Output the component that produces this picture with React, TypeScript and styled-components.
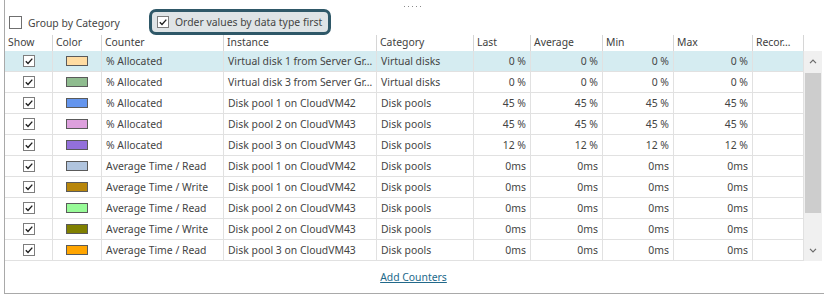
import styled, { createGlobalStyle } from 'styled-components';

const GlobalStyle = createGlobalStyle`
    html, body {
        margin: 0;
        padding: 0;
        background: #ffffff;
    }
    body {
        font-family: 'Noto Sans', 'Open Sans', sans-serif;
        font-size: 10.4px;
        color: #444444;
    }
`;

const COLUMNS = '48px 49px 122px 153px 97px 57px 72px 71px 79px 51px';

type Counter = {
    color: string;
    counter: string;
    instance: string;
    category: string;
    value: string;
};

const counters: Counter[] = [
    { color: '#ffdca2', counter: '% Allocated', instance: 'Virtual disk 1 from Server Gr…', category: 'Virtual disks', value: '0 %' },
    { color: '#8fbc8f', counter: '% Allocated', instance: 'Virtual disk 3 from Server Gr…', category: 'Virtual disks', value: '0 %' },
    { color: '#6495ed', counter: '% Allocated', instance: 'Disk pool 1 on CloudVM42', category: 'Disk pools', value: '45 %' },
    { color: '#dda0dd', counter: '% Allocated', instance: 'Disk pool 2 on CloudVM43', category: 'Disk pools', value: '45 %' },
    { color: '#9370db', counter: '% Allocated', instance: 'Disk pool 3 on CloudVM43', category: 'Disk pools', value: '12 %' },
    { color: '#b0c4de', counter: 'Average Time / Read', instance: 'Disk pool 1 on CloudVM42', category: 'Disk pools', value: '0ms' },
    { color: '#b8860b', counter: 'Average Time / Write', instance: 'Disk pool 1 on CloudVM42', category: 'Disk pools', value: '0ms' },
    { color: '#98fb98', counter: 'Average Time / Read', instance: 'Disk pool 2 on CloudVM43', category: 'Disk pools', value: '0ms' },
    { color: '#808000', counter: 'Average Time / Write', instance: 'Disk pool 2 on CloudVM43', category: 'Disk pools', value: '0ms' },
    { color: '#ffa500', counter: 'Average Time / Read', instance: 'Disk pool 3 on CloudVM43', category: 'Disk pools', value: '0ms' },
];

function Check({ size }: { size: number }) {
    return (
        <CheckBox $size={size}>
            <svg width={size - 2} height={size - 2} viewBox="0 0 10 10">
                <polyline points="1.8,5.2 4,7.4 8.3,2.6" fill="none" stroke="#1e1e1e" strokeWidth="1.4" />
            </svg>
        </CheckBox>
    );
}

function Chevron({ up }: { up?: boolean }) {
    return (
        <svg width="8" height="5" viewBox="0 0 8 5">
            <polyline
                points={up ? '1,4.2 4,1.2 7,4.2' : '1,0.8 4,3.8 7,0.8'}
                fill="none"
                stroke="#6a6a6a"
                strokeWidth="1.2"
            />
        </svg>
    );
}

export default function App(): JSX.Element {
    return (
        <>
            <GlobalStyle />
            <Panel>
                <GripRow>
                    <Grip />
                </GripRow>
                <Toolbar>
                    <Option>
                        <EmptyBox />
                        <span>Group by Category</span>
                    </Option>
                    <Highlight>
                        <Check size={12} />
                        <span>Order values by data type first</span>
                    </Highlight>
                </Toolbar>
                <HeaderRow>
                    <HeaderCell>Show</HeaderCell>
                    <HeaderCell>Color</HeaderCell>
                    <HeaderCell>Counter</HeaderCell>
                    <HeaderCell>Instance</HeaderCell>
                    <HeaderCell>Category</HeaderCell>
                    <HeaderCell>Last</HeaderCell>
                    <HeaderCell>Average</HeaderCell>
                    <HeaderCell>Min</HeaderCell>
                    <HeaderCell>Max</HeaderCell>
                    <HeaderCell>Recor…</HeaderCell>
                </HeaderRow>
                <Body>
                    <Rows>
                        {counters.map((c, i) => (
                            <Row key={i} $selected={i === 0}>
                                <Cell $center>
                                    <Check size={12} />
                                </Cell>
                                <Cell $center>
                                    <Swatch $color={c.color} />
                                </Cell>
                                <Cell>{c.counter}</Cell>
                                <Cell>{c.instance}</Cell>
                                <Cell>{c.category}</Cell>
                                <Cell $right>{c.value}</Cell>
                                <Cell $right>{c.value}</Cell>
                                <Cell $right>{c.value}</Cell>
                                <Cell $right>{c.value}</Cell>
                                <Cell />
                            </Row>
                        ))}
                    </Rows>
                    <Scrollbar>
                        <ScrollButton>
                            <Chevron up />
                        </ScrollButton>
                        <Thumb />
                        <Track />
                        <ScrollButton>
                            <Chevron />
                        </ScrollButton>
                    </Scrollbar>
                </Body>
                <Footer>
                    <AddLink>Add Counters</AddLink>
                </Footer>
            </Panel>
        </>
    );
}

const Panel = styled.div`
    box-sizing: border-box;
    margin-left: 4px;
    width: 820px;
    height: 294px;
    border-left: 1px solid #a9a9a9;
    border-bottom: 1px solid #a9a9a9;
    display: flex;
    flex-direction: column;
`;

const GripRow = styled.div`
    height: 9px;
    display: flex;
    justify-content: center;
    align-items: center;
    padding-right: 4px;
`;

const Grip = styled.div`
    width: 17px;
    height: 1px;
    margin-top: 4px;
    background-image: linear-gradient(to right, #8a8a8a 1px, transparent 1px);
    background-size: 4px 1px;
`;

const Toolbar = styled.div`
    height: 26px;
    display: flex;
    align-items: center;
    padding-left: 4px;
`;

const Option = styled.label`
    display: flex;
    align-items: center;
    gap: 6px;
    width: 140px;
    padding-top: 1px;
`;

const CheckBox = styled.span<{ $size: number }>`
    box-sizing: border-box;
    display: inline-flex;
    align-items: center;
    justify-content: center;
    width: ${(p) => p.$size}px;
    height: ${(p) => p.$size}px;
    border: 1px solid #7d7d7d;
    background: #ffffff;
    flex: none;
`;

const EmptyBox = styled.span`
    box-sizing: border-box;
    width: 13px;
    height: 13px;
    border: 1px solid #6f6f6f;
    background: #ffffff;
`;

const Highlight = styled.div`
    box-sizing: border-box;
    height: 26px;
    display: flex;
    align-items: center;
    gap: 6px;
    padding: 0 6px 0 5px;
    border: 3px solid #2f5868;
    border-radius: 7px;
    background: #dfe4e6;
    white-space: nowrap;
`;

const HeaderRow = styled.div`
    display: grid;
    grid-template-columns: ${COLUMNS};
    height: 16px;
`;

const HeaderCell = styled.div`
    border-right: 1px solid #d6d6d6;
    padding-left: 3px;
    line-height: 15px;
    color: #3e3e3e;
    white-space: nowrap;
    overflow: hidden;
`;

const Body = styled.div`
    display: flex;
    height: 210px;
`;

const Rows = styled.div`
    width: 799px;
`;

const Row = styled.div<{ $selected?: boolean }>`
    box-sizing: border-box;
    display: grid;
    grid-template-columns: ${COLUMNS};
    height: 21px;
    border-bottom: 1px solid #e1e1e1;
    background: ${(p) => (p.$selected ? '#d5ecf1' : '#ffffff')};
`;

const Cell = styled.div<{ $center?: boolean; $right?: boolean }>`
    display: flex;
    align-items: center;
    justify-content: ${(p) => (p.$center ? 'center' : p.$right ? 'flex-end' : 'flex-start')};
    padding: ${(p) => (p.$right ? '0 4px 0 0' : p.$center ? '0' : '0 0 0 4px')};
    border-right: 1px solid #e1e1e1;
    white-space: nowrap;
    overflow: hidden;
    color: #444444;
`;

const Swatch = styled.span<{ $color: string }>`
    box-sizing: border-box;
    width: 22px;
    height: 10px;
    background: ${(p) => p.$color};
    border: 1px solid #5a5a5a;
`;

const Scrollbar = styled.div`
    width: 18px;
    display: flex;
    flex-direction: column;
    background: #f0f0f0;
`;

const ScrollButton = styled.div`
    height: 21px;
    display: flex;
    align-items: center;
    justify-content: center;
    flex: none;
`;

const Thumb = styled.div`
    height: 140px;
    margin: 1px 1px 0;
    background: #cdcdcd;
`;

const Track = styled.div`
    flex: 1;
`;

const Footer = styled.div`
    flex: 1;
    display: flex;
    justify-content: center;
    align-items: center;
    padding-right: 2px;
`;

const AddLink = styled.a`
    color: #22698a;
    text-decoration: underline;
    cursor: pointer;
`;
